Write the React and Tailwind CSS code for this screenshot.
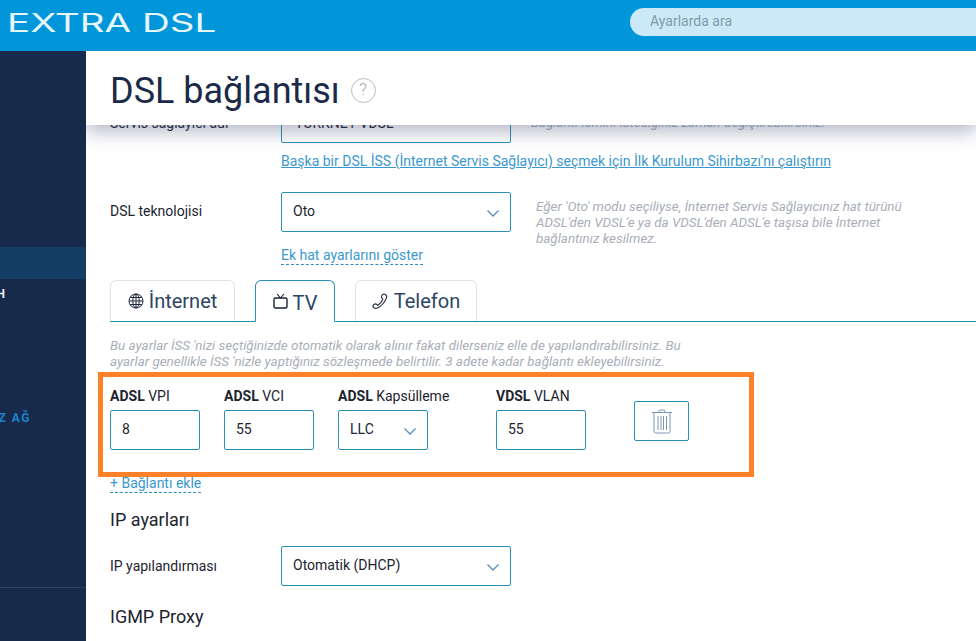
import React from "react";

const Chevron = () => (
  <svg width="14" height="9" viewBox="0 0 14 9" fill="none" stroke="#5b8db8" strokeWidth="1.3"><path d="M1.5 1.5 7 7l5.5-5.5" /></svg>
);

const Field = ({ value, w = "w-[90px]" }) => (
  <div className={`${w} h-10 border border-[#2a8fb8] rounded-[2px] px-[11px] flex items-center text-[14px] text-[#1c2430] bg-white`}><span className="-mt-[2px]">{value}</span></div>
);

const Select = ({ value, w = "w-[230px]" }) => (
  <div className={`${w} h-10 border border-[#2a8fb8] rounded-[2px] pl-[11px] pr-[10px] flex items-center justify-between text-[14px] text-[#1c2430] bg-white`}>
    <span className="-mt-[2px]">{value}</span>
    <span className="mt-[3px]"><Chevron /></span>
  </div>
);

const Hint = ({ children, className = "" }) => (
  <p className={`text-[13.4px] leading-4 italic text-[#a9aeba] ${className}`}>{children}</p>
);

const Mini = ({ bold, rest, w = "w-[114px]", children }) => (
  <div className={`${w} shrink-0 flex flex-col`}>
    <div className="text-[14px] leading-4 text-[#1c2430] h-[22px] whitespace-nowrap"><b className="font-bold">{bold}</b> {rest}</div>
    {children}
  </div>
);

const Globe = () => (
  <svg width="16" height="16" viewBox="0 0 16 16" fill="none" stroke="#1f2a3c" strokeWidth="1">
    <circle cx="8" cy="8" r="7" /><ellipse cx="8" cy="8" rx="3.2" ry="7" /><path d="M8 1v14M1 8h14M2 4.5h12M2 11.5h12" />
  </svg>
);
const Tv = () => (
  <svg width="15" height="16" viewBox="0 0 15 16" fill="none" stroke="#1a2130" strokeWidth="1.4">
    <rect x="1" y="5" width="13" height="10" rx="1.5" /><path d="M4 1l3.5 4L11 1" strokeWidth="1.1" />
  </svg>
);
const Phone = () => (
  <svg width="16" height="17" viewBox="0 0 16 17" fill="none" stroke="#1f2a3c" strokeWidth="1.1">
    <path d="M11 1.2c1-.5 2-.2 3 1 .9 1.2.8 2.2.2 3.2C12.8 9 9.5 13 5.5 15c-1.2.6-2.6.5-3.6-.4-1-1-1.2-1.800-.6-2.500.6-.6 1.500-1.100 2.100-1.200.6-.1 1 .3 1.400.8.4.5.8.7 1.400.3C8 10.700 10 8 10.600 6.700c.3-.7 0-1.100-.5-1.500-.5-.4-.8-.9-.6-1.500.2-.7.8-2 1.500-2.500z" />
  </svg>
);
const Trash = () => (
  <svg width="22" height="25" viewBox="0 0 22 25" fill="none" stroke="#7d96b6" strokeWidth="1">
    <path d="M1 3.500h20M8 3.500V1.800C8 1.300 8.400 1 9 1h4c.6 0 1 .3 1 .8v1.700" />
    <path d="M3 3.500v19c0 .9.500 1.500 1.400 1.500h13.200c.9 0 1.400-.6 1.400-1.500v-19" />
    <path d="M7 7v14M10 7v14M12.500 7v14M15.500 7v14" />
  </svg>
);

const Tab = ({ active, w, icon, label, gap }) => (
  <div className={`${w} h-[41px] rounded-t-[6px] border flex items-center justify-center ${gap} text-[20px] ${active ? "border-[#2a8fb8] border-b-white bg-white text-[#2d4464] relative z-10 h-[42px] -mb-px" : "border-[#dfe3e8] border-b-0 text-[#2d4464]"}`}>
    {icon}<span className={active ? "mt-[3px]" : ""}>{label}</span>
  </div>
);

export default function App() {
  return (
    <div className="w-[976px] h-[641px] overflow-hidden flex flex-col bg-white" style={{ fontFamily: "Roboto, sans-serif" }}>
      <header className="h-[51px] shrink-0 bg-[#0096d9] flex items-center justify-between">
        <div className="pl-[7px] -mt-[5px]">
          <div className="text-[25px] leading-none font-normal text-[#e6f6fd] origin-left scale-x-[1.54] whitespace-nowrap" style={{ fontFamily: "Inter, sans-serif" }}>EXTRA DSL</div>
        </div>
        <div className="w-[346px] h-7 -mt-[8px] rounded-l-full bg-[#cce9f8] pl-5 flex items-center text-[14px] text-[#7f9aab]">Ayarlarda ara</div>
      </header>
      <div className="flex flex-1 min-h-0">
        <aside className="w-[86px] shrink-0 bg-[#172a4b] overflow-hidden flex flex-col">
          <div className="mt-[196px] h-[32px] bg-[#133f66]" />
          <div className="mt-[7px] w-[5px] flex justify-end whitespace-nowrap text-[12px] leading-4 font-bold text-[#e8edf3]">TEKNİK DESTEK H</div>
          <div className="mt-[108px] w-[31px] flex justify-end whitespace-nowrap text-[12px] leading-4 font-bold tracking-[1.5px] text-[#1c84cf]">YEREL Z AĞ</div>
          <div className="mt-[161px] h-px bg-[#2c4161]" />
        </aside>
        <main className="relative flex-1 min-w-0 overflow-hidden">
          <div className="absolute top-0 left-0 right-0 h-[74px] z-20 bg-white pl-6 flex items-center gap-[11px] shadow-[0_6px_18px_rgba(60,70,110,0.4)]">
            <h1 className="text-[36px] leading-none font-normal text-[#1c2a4a] mt-[6px] whitespace-nowrap">DSL bağlantısı</h1>
            <span className="w-[25px] h-[25px] mt-[4px] rounded-full border-[1.5px] border-[#bdbdbd] flex items-center justify-center text-[17px] font-light text-[#a8a8a8]">?</span>
          </div>

          <div className="pt-[52px] pl-6">
            <div className="flex items-center h-10">
              <div className="w-[171px] text-[14px] text-[#1c2430]">Servis sağlayıcı adı</div>
              <div className="w-[230px] h-10 border border-[#2a8fb8] rounded-[2px] px-[13px] flex items-center text-[14px] text-[#1c2430]">TÜRKNET VDSL</div>
              <Hint className="ml-5">Bağlantı ismini istediğiniz zaman değiştirebilirsiniz.</Hint>
            </div>
            <a className="block ml-[171px] mt-[10px] text-[14px] leading-4 underline text-[#3b98cf] whitespace-nowrap">Başka bir DSL İSS (İnternet Servis Sağlayıcı) seçmek için İlk Kurulum Sihirbazı'nı çalıştırın</a>

            <div className="flex items-start mt-[23px]">
              <div className="w-[171px] text-[14px] text-[#1c2430] leading-10 -mt-[1px]">DSL teknolojisi</div>
              <Select value="Oto" />
              <Hint className="ml-[25px] w-[385px] mt-[7px]">Eğer 'Oto' modu seçiliyse, İnternet Servis Sağlayıcınız hat türünü ADSL'den VDSL'e ya da VDSL'den ADSL'e taşısa bile İnternet bağlantınız kesilmez.</Hint>
            </div>
            <div className="ml-[171px] mt-0 w-fit text-[14px] leading-[17px] text-[#3b98cf] border-b border-dashed border-[#2a8fb8]">Ek hat ayarlarını göster</div>

            <div className="mt-4 flex gap-5 items-end border-b border-[#2a8fb8] h-[41px]">
              <Tab w="w-[125px]" gap="gap-[5px]" icon={<Globe />} label="İnternet" />
              <Tab active w="w-[80px]" gap="gap-[5px]" icon={<Tv />} label="TV" />
              <Tab w="w-[122px]" gap="gap-[6px]" icon={<Phone />} label="Telefon" />
            </div>

            <Hint className="mt-4 w-[590px]">Bu ayarlar İSS 'nizi seçtiğinizde otomatik olarak alınır fakat dilerseniz elle de yapılandırabilirsiniz. Bu ayarlar genellikle İSS 'nizle yaptığınız sözleşmede belirtilir. 3 adete kadar bağlantı ekleyebilirsiniz.</Hint>

            <div className="relative z-10 -ml-3 mt-[2px] w-[656px] h-[105px] border-[5px] border-[#fd8128] pl-[7px] pt-[11px] flex">
              <Mini bold="ADSL" rest="VPI"><Field value="8" /></Mini>
              <Mini bold="ADSL" rest="VCI"><Field value="55" /></Mini>
              <Mini bold="ADSL" rest="Kapsülleme" w="w-[158px]"><Select value="LLC" w="w-[90px]" /></Mini>
              <Mini bold="VDSL" rest="VLAN" w="w-[138px]"><Field value="55" /></Mini>
              <div className="w-[55px] h-10 mt-[13px] border border-[#2a8fb8] rounded-[2px] flex items-center justify-center"><Trash /></div>
            </div>

            <div className="-mt-[2px] w-fit text-[14px] leading-[17px] text-[#3b98cf] border-b border-dashed border-[#2a8fb8]">+ Bağlantı ekle</div>

            <h2 className="mt-4 text-[18px] leading-[22px] font-normal text-[#1c2430]">IP ayarları</h2>
            <div className="mt-[15px] flex items-center">
              <div className="w-[171px] text-[14px] text-[#1c2430]">IP yapılandırması</div>
              <Select value="Otomatik (DHCP)" />
            </div>
            <h2 className="mt-5 text-[18px] leading-[22px] font-normal text-[#1c2430]">IGMP Proxy</h2>
          </div>
        </main>
      </div>
    </div>
  );
}
